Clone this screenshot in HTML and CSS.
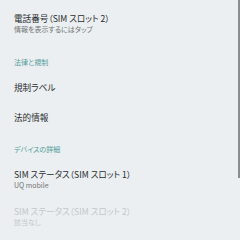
FILE: index.html
```html
<!DOCTYPE html>
<html lang="ja">
<head>
<meta charset="utf-8">
<link rel="stylesheet" href="styles.css">
</head>
<body>
<div class="screen">
  <div class="list">
    <div class="item two first">
      <div class="title">電話番号（SIM スロット 2）</div>
      <div class="sub">情報を表示するにはタップ</div>
    </div>
    <div class="header h1">法律と規制</div>
    <div class="item one"><div class="title">規制ラベル</div></div>
    <div class="item one"><div class="title">法的情報</div></div>
    <div class="header h2">デバイスの詳細</div>
    <div class="item two">
      <div class="title">SIM ステータス（SIM スロット 1）</div>
      <div class="sub">UQ mobile</div>
    </div>
    <div class="item two disabled">
      <div class="title">SIM ステータス（SIM スロット 2）</div>
      <div class="sub">該当なし</div>
    </div>
  </div>
  <div class="scrollbar"></div>
</div>
</body>
</html>
```
FILE: styles.css
```css
html, body {
  margin: 0;
  padding: 0;
  background: #eceff1;
}
.screen {
  position: relative;
  width: 240px;
  height: 240px;
  overflow: hidden;
  font-family: "Noto Sans CJK JP", "Noto Sans", sans-serif;
  font-feature-settings: "palt";
}
.list {
  display: flex;
  flex-direction: column;
  padding: 0 0 0 14px;
}
.item {
  display: flex;
  flex-direction: column;
}
.item.two {
  padding: 10px 0 5px;
}
.item.two.first {
  padding-top: 13px;
  padding-bottom: 6px;
}
.item.one {
  height: 30px;
  justify-content: center;
}
.title {
  font-size: 8.6px;
  line-height: 11px;
  color: #282c2e;
}
.item.one .title {
  line-height: 12px;
}
.sub {
  font-size: 7px;
  line-height: 11px;
  color: #707476;
}
.header {
  font-size: 7px;
  line-height: 10px;
  color: #4f9d9a;
  padding-bottom: 5px;
}
.header.h1 {
  padding-top: 16px;
}
.header.h2 {
  padding-top: 12px;
}
.disabled .title, .disabled .sub {
  color: #c3c7c9;
}
.scrollbar {
  position: absolute;
  right: 0;
  top: 0;
  width: 2px;
  height: 178px;
  background: #8a8c8d;
}
```
